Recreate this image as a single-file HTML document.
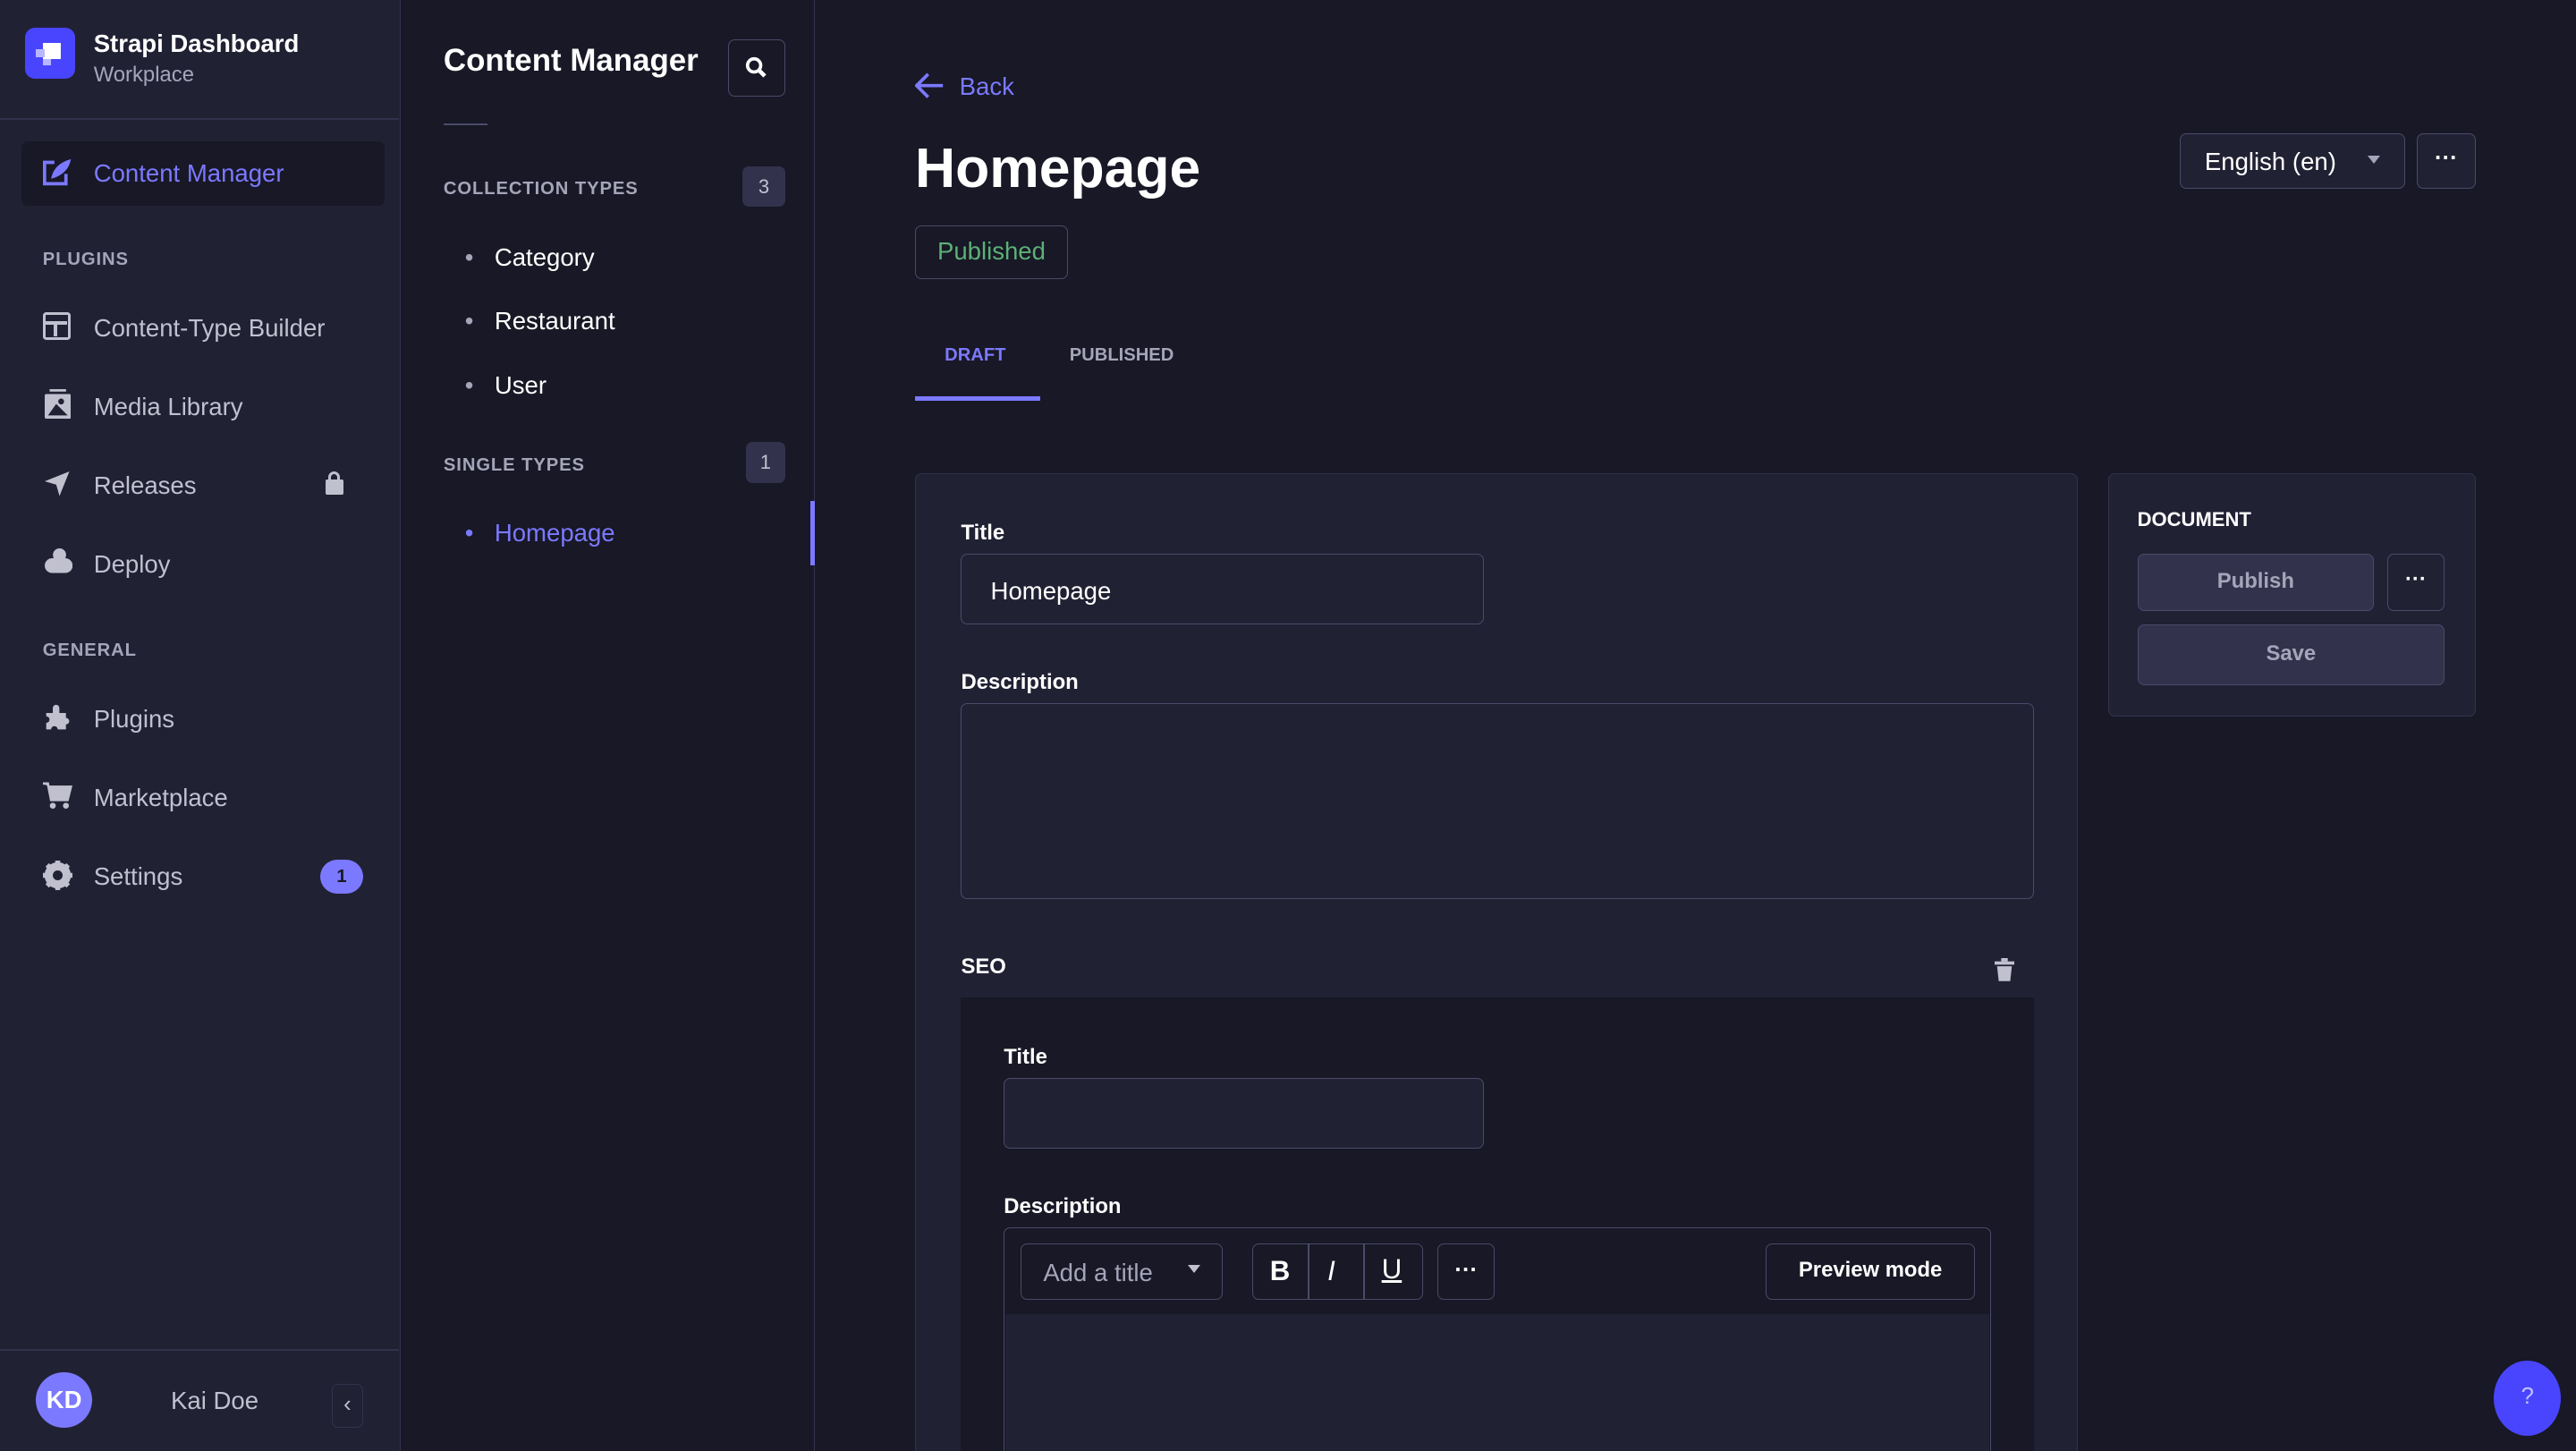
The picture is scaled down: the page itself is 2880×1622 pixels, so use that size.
<!DOCTYPE html><html><head><meta charset="utf-8"><style>
*{box-sizing:border-box;margin:0;padding:0}
html,body{width:2880px;height:1622px;overflow:hidden;background:#181826}
#r{zoom:1.83673;width:1568px;height:883px;position:relative;font-family:"Liberation Sans",sans-serif;color:#fff}
.a{position:absolute}
.side{left:0;top:0;width:244px;height:883px;background:#212134;border-right:1px solid #32324d}
.nav{left:244px;top:0;width:252px;height:883px;background:#181826;border-right:1px solid #32324d}
.it{font-size:15px;color:#c0c0cf}
.sec{font-size:11px;font-weight:bold;color:#a5a5ba;letter-spacing:.5px}
.box{border:1px solid #4a4a6a;border-radius:4px;background:#212134}
.lbl{font-size:13px;font-weight:bold;color:#fff}
</style></head><body><div id="r">
<div class="a side"></div>
<div class="a" style="left:15px;top:17px;width:31px;height:31px;background:#4945ff;border-radius:6px"><div class="a" style="left:11px;top:9px;width:11px;height:10px;background:#fff"></div><div class="a" style="left:7px;top:13px;width:5px;height:5px;background:#b8b6ff"></div><div class="a" style="left:11px;top:19px;width:5px;height:4px;background:#b8b6ff"></div></div>
<div class="a" style="left:57px;top:18px;font-size:15px;font-weight:bold">Strapi Dashboard</div>
<div class="a" style="left:57px;top:38px;font-size:13px;color:#a5a5ba">Workplace</div>
<div class="a" style="left:0;top:72px;width:243px;height:1px;background:#32324d"></div>
<div class="a" style="left:13px;top:86px;width:221px;height:39px;background:#181826;border-radius:4px"></div>
<svg class="a" style="left:26px;top:96px" width="18" height="18"><path d="M7 3 H1 V16 H14 V10" fill="none" stroke="#7b79ff" stroke-width="2"/><path d="M5 13 C6 7 10 3 17 1 C16 7 12 11 5 13 Z" fill="#7b79ff"/></svg>
<div class="a" style="left:57px;top:97px;font-size:15px;color:#7b79ff">Content Manager</div>
<div class="a sec" style="left:26px;top:152px">PLUGINS</div>
<div class="a" style="left:26px;top:190px;width:17px;height:17px;border:2px solid #c0c0cf;border-radius:2px"><div class="a" style="left:0;top:4px;width:13px;height:2px;background:#c0c0cf"></div><div class="a" style="left:5px;top:4px;width:2px;height:9px;background:#c0c0cf"></div></div>
<div class="a it" style="left:57px;top:191px">Content-Type Builder</div>
<svg class="a" style="left:27px;top:237px" width="16" height="18"><rect x="3" y="0" width="10" height="1.5" fill="#c0c0cf"/><rect x="0" y="3" width="16" height="15" rx="1" fill="#c0c0cf"/><circle cx="10" cy="7.5" r="1.8" fill="#212134"/><path d="M2 16 L7 9 L11 13 L14 16 Z" fill="#212134"/></svg>
<div class="a it" style="left:57px;top:239px">Media Library</div>
<svg class="a" style="left:27px;top:287px" width="16" height="16"><path d="M0 6 L15 0 L9 15 L7 8 Z" fill="#c0c0cf"/></svg>
<div class="a it" style="left:57px;top:287px">Releases</div>
<div class="a" style="left:198px;top:292px;width:11px;height:9px;background:#c0c0cf;border-radius:1px"></div><div class="a" style="left:200px;top:287px;width:7px;height:8px;border:2px solid #c0c0cf;border-radius:4px 4px 0 0"></div>
<svg class="a" style="left:27px;top:334px" width="17" height="15"><circle cx="9" cy="4" r="4" fill="#c0c0cf"/><rect x="0" y="6" width="17" height="9" rx="4.5" fill="#c0c0cf"/></svg>
<div class="a it" style="left:57px;top:335px">Deploy</div>
<div class="a sec" style="left:26px;top:390px">GENERAL</div>
<svg class="a" style="left:26px;top:428px" width="18" height="17"><path d="M2 6 H6 V3 A2 2 0 0 1 10 3 V6 H14 V9 A2 2 0 0 1 14 13 V16 H9 A2 2 0 0 0 5 16 H2 V12 A2 2 0 0 0 2 8 Z" fill="#c0c0cf"/></svg>
<div class="a it" style="left:57px;top:429px">Plugins</div>
<svg class="a" style="left:26px;top:476px" width="18" height="17"><path d="M0 1 H3 L5 11 H15 L17 3 H4" fill="#c0c0cf" stroke="#c0c0cf" stroke-width="1.5"/><circle cx="6" cy="14.5" r="1.8" fill="#c0c0cf"/><circle cx="14" cy="14.5" r="1.8" fill="#c0c0cf"/></svg>
<div class="a it" style="left:57px;top:477px">Marketplace</div>
<svg class="a" style="left:26px;top:524px" width="18" height="18"><circle cx="9" cy="9" r="6" fill="none" stroke="#c0c0cf" stroke-width="4"/><g stroke="#c0c0cf" stroke-width="3"><path d="M9 0 V18 M0 9 H18 M2.6 2.6 L15.4 15.4 M15.4 2.6 L2.6 15.4"/></g><circle cx="9" cy="9" r="3" fill="#212134"/></svg>
<div class="a it" style="left:57px;top:525px">Settings</div>
<div class="a" style="left:195px;top:523px;width:26px;height:21px;background:#7b79ff;border-radius:11px;font-size:11px;font-weight:bold;color:#181826;text-align:center;line-height:21px">1</div>
<div class="a" style="left:0;top:821px;width:243px;height:1px;background:#32324d"></div>
<div class="a" style="left:22px;top:835px;width:34px;height:34px;background:#7b79ff;border-radius:50%;font-size:15px;font-weight:bold;text-align:center;line-height:34px">KD</div>
<div class="a it" style="left:104px;top:844px">Kai Doe</div>
<div class="a" style="left:202px;top:842px;width:19px;height:27px;border:1px solid #32324d;border-radius:4px;color:#c0c0cf;font-size:14px;text-align:center;line-height:25px">‹</div>
<div class="a nav"></div>
<div class="a" style="left:270px;top:26px;font-size:19px;font-weight:bold">Content Manager</div>
<div class="a box" style="left:443px;top:24px;width:35px;height:35px;background:#181826"><svg class="a" style="left:10px;top:10px" width="14" height="14"><circle cx="5.5" cy="5.5" r="4" fill="none" stroke="#fff" stroke-width="2"/><path d="M8.5 8.5 L12 12" stroke="#fff" stroke-width="2.5"/></svg></div>
<div class="a" style="left:270px;top:75px;width:27px;height:1px;background:#4a4a6a"></div>
<div class="a sec" style="left:270px;top:109px">COLLECTION TYPES</div>
<div class="a" style="left:452px;top:101px;width:26px;height:25px;background:#32324d;border-radius:4px;font-size:12px;color:#c0c0cf;text-align:center;line-height:25px">3</div>
<div class="a" style="left:283px;top:148px;font-size:15px;color:#a5a5ba">•</div><div class="a" style="left:301px;top:148px;font-size:15px">Category</div>
<div class="a" style="left:283px;top:187px;font-size:15px;color:#a5a5ba">•</div><div class="a" style="left:301px;top:187px;font-size:15px">Restaurant</div>
<div class="a" style="left:283px;top:226px;font-size:15px;color:#a5a5ba">•</div><div class="a" style="left:301px;top:226px;font-size:15px">User</div>
<div class="a sec" style="left:270px;top:277px">SINGLE TYPES</div>
<div class="a" style="left:454px;top:269px;width:24px;height:25px;background:#32324d;border-radius:4px;font-size:12px;color:#c0c0cf;text-align:center;line-height:25px">1</div>
<div class="a" style="left:283px;top:316px;font-size:15px;color:#7b79ff">•</div><div class="a" style="left:301px;top:316px;font-size:15px;color:#7b79ff">Homepage</div>
<div class="a" style="left:493px;top:305px;width:3px;height:39px;background:#7b79ff"></div>
<svg class="a" style="left:557px;top:44px" width="18" height="16"><path d="M17 8 H2 M8 1 L1 8 L8 15" fill="none" stroke="#7b79ff" stroke-width="2"/></svg>
<div class="a" style="left:584px;top:44px;font-size:15px;color:#7b79ff">Back</div>
<div class="a" style="left:557px;top:83px;font-size:34px;font-weight:bold">Homepage</div>
<div class="a" style="left:557px;top:137px;width:93px;height:33px;border:1px solid #4a4a6a;border-radius:4px;font-size:15px;color:#5cb176;text-align:center;line-height:31px">Published</div>
<div class="a box" style="left:1327px;top:81px;width:137px;height:34px;background:#212134"></div>
<div class="a" style="left:1342px;top:90px;font-size:15px">English (en)</div>
<div class="a" style="left:1441px;top:95px;border:4px solid transparent;border-top:5px solid #a5a5ba"></div>
<div class="a box" style="left:1471px;top:81px;width:36px;height:34px;font-size:14px;text-align:center;line-height:30px;font-weight:bold">···</div>
<div class="a" style="left:575px;top:210px;font-size:11px;font-weight:bold;color:#7b79ff">DRAFT</div>
<div class="a" style="left:651px;top:210px;font-size:11px;font-weight:bold;color:#a5a5ba">PUBLISHED</div>
<div class="a" style="left:557px;top:241px;width:76px;height:3px;background:#7b79ff"></div>
<div class="a" style="left:557px;top:288px;width:708px;height:600px;background:#212134;border:1px solid #32324d;border-radius:4px"></div>
<div class="a lbl" style="left:585px;top:317px">Title</div>
<div class="a box" style="left:585px;top:337px;width:318px;height:43px"></div>
<div class="a" style="left:603px;top:351px;font-size:15px">Homepage</div>
<div class="a lbl" style="left:585px;top:408px">Description</div>
<div class="a box" style="left:585px;top:428px;width:653px;height:119px"></div>
<div class="a lbl" style="left:585px;top:581px">SEO</div>
<svg class="a" style="left:1214px;top:583px" width="12" height="14"><rect x="0" y="2" width="12" height="2" fill="#c0c0cf"/><rect x="4" y="0" width="4" height="2" fill="#c0c0cf"/><path d="M1.5 5 H10.5 L9.5 14 H2.5 Z" fill="#c0c0cf"/></svg>
<div class="a" style="left:585px;top:607px;width:653px;height:290px;background:#181826"></div>
<div class="a lbl" style="left:611px;top:636px">Title</div>
<div class="a box" style="left:611px;top:656px;width:292px;height:43px"></div>
<div class="a lbl" style="left:611px;top:727px">Description</div>
<div class="a" style="left:611px;top:747px;width:601px;height:150px;border:1px solid #4a4a6a;border-radius:4px;background:#181826"></div>
<div class="a" style="left:612px;top:800px;width:599px;height:90px;background:#212134"></div>
<div class="a box" style="left:621px;top:757px;width:123px;height:34px;background:#181826"></div>
<div class="a" style="left:635px;top:766px;font-size:15px;color:#a5a5ba">Add a title</div>
<div class="a" style="left:723px;top:770px;border:4px solid transparent;border-top:5px solid #c0c0cf"></div>
<div class="a box" style="left:762px;top:757px;width:104px;height:34px;background:#181826"></div>
<div class="a" style="left:796px;top:757px;width:1px;height:34px;background:#4a4a6a"></div>
<div class="a" style="left:830px;top:757px;width:1px;height:34px;background:#4a4a6a"></div>
<div class="a" style="left:773px;top:764px;font-size:17px;font-weight:bold">B</div>
<div class="a" style="left:808px;top:764px;font-size:17px;font-style:italic">I</div>
<div class="a" style="left:841px;top:763px;font-size:17px;text-decoration:underline">U</div>
<div class="a box" style="left:875px;top:757px;width:35px;height:34px;background:#181826;text-align:center;font-size:14px;line-height:32px;font-weight:bold">···</div>
<div class="a box" style="left:1075px;top:757px;width:127px;height:34px;background:#181826;text-align:center;font-size:13px;font-weight:bold;line-height:32px">Preview mode</div>
<div class="a" style="left:1283px;top:288px;width:224px;height:148px;background:#212134;border:1px solid #32324d;border-radius:4px"></div>
<div class="a" style="left:1301px;top:309px;font-size:12px;font-weight:bold">DOCUMENT</div>
<div class="a" style="left:1301px;top:337px;width:144px;height:35px;background:#32324d;border:1px solid #4a4a6a;border-radius:4px;text-align:center;line-height:33px;font-size:13px;font-weight:bold;color:#a5a5ba">Publish</div>
<div class="a box" style="left:1453px;top:337px;width:35px;height:35px;text-align:center;line-height:31px;font-size:13px;font-weight:bold">···</div>
<div class="a" style="left:1301px;top:380px;width:187px;height:37px;background:#32324d;border:1px solid #4a4a6a;border-radius:4px;text-align:center;line-height:35px;font-size:13px;font-weight:bold;color:#a5a5ba">Save</div>
<div class="a" style="left:1518px;top:828px;width:41px;height:46px;background:#4945ff;border-radius:50%;text-align:center;line-height:44px;font-size:14px;color:#c0c0ff">?</div>
</div></body></html>
